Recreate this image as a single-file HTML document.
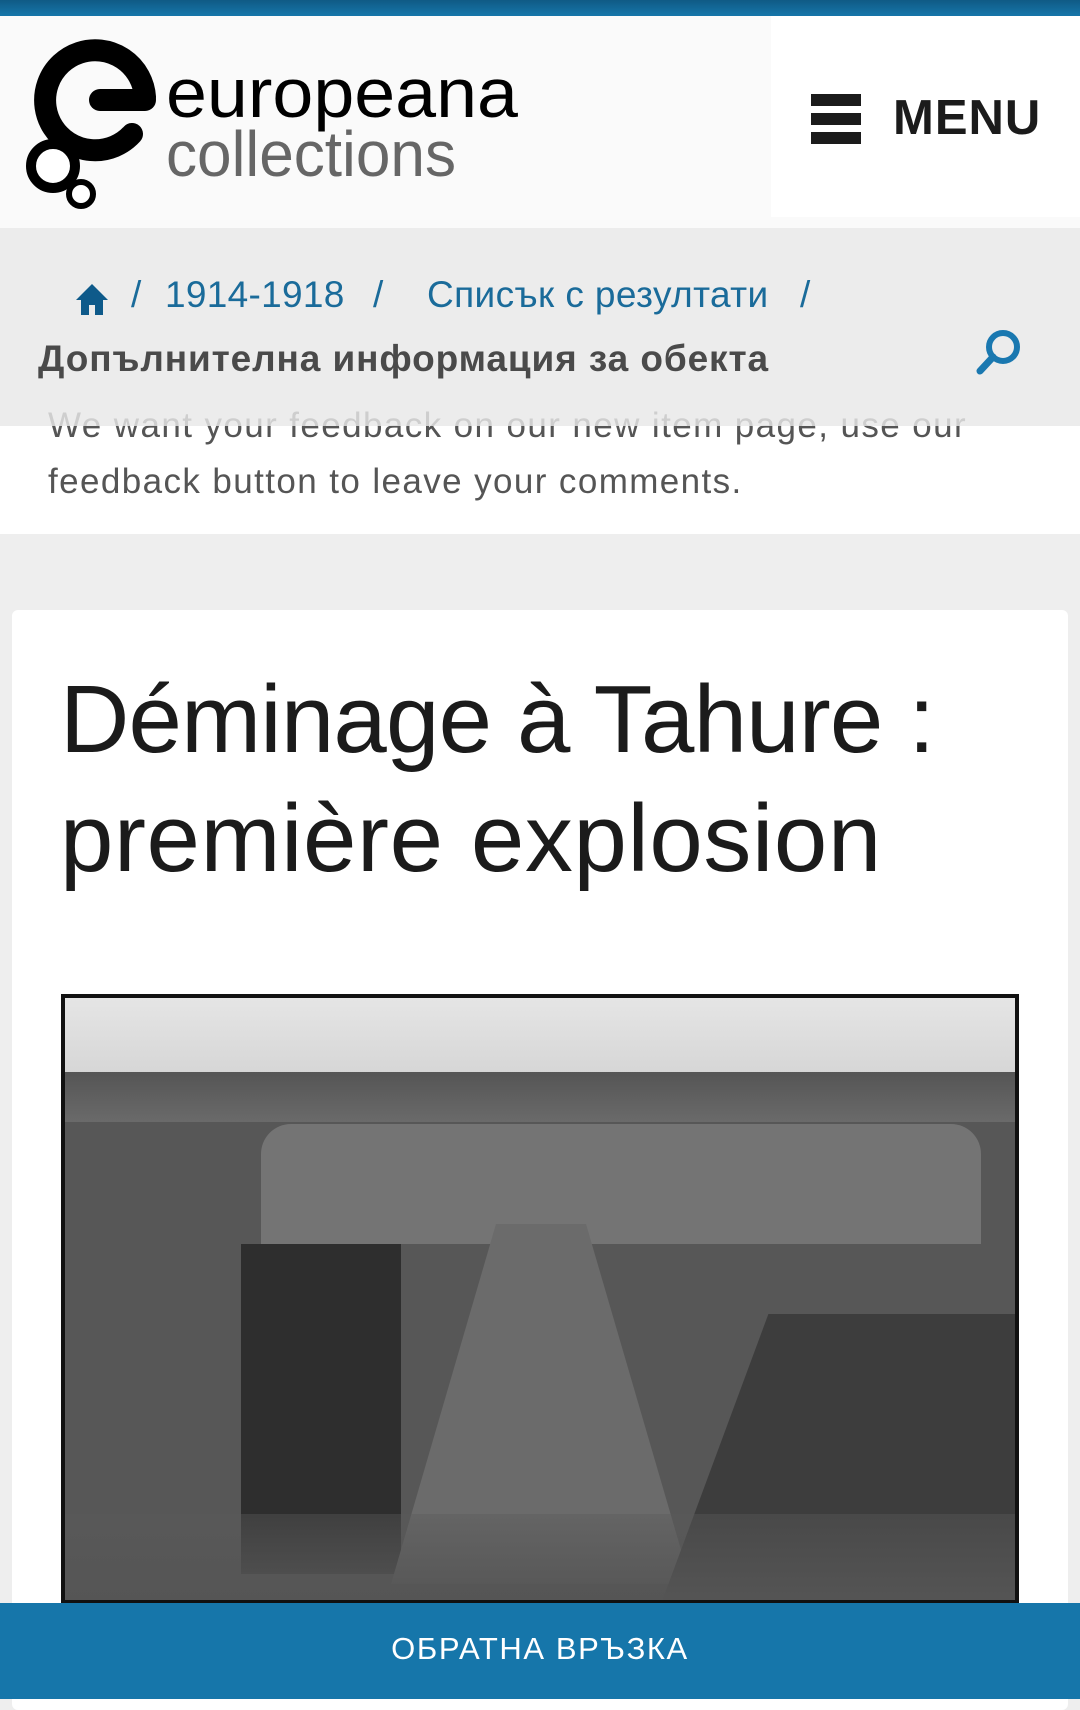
<!DOCTYPE html>
<html><head><meta charset="utf-8">
<style>
*{margin:0;padding:0;box-sizing:border-box}
body{width:1080px;height:1699px;overflow:hidden;background:#eeeeee;font-family:"Liberation Sans","Noto Sans CJK SC",sans-serif;position:relative}
.abs{position:absolute}
</style></head><body>
<div class="abs" style="left:0;top:0;width:1080px;height:16px;background:linear-gradient(#0f5a85,#1676aa)"></div>
<div class="abs" style="left:0;top:16px;width:1080px;height:212px;background:#fafafa;box-shadow:0 2px 4px rgba(0,0,0,0.08)"></div>
<div class="abs" style="left:771px;top:16px;width:309px;height:201px;background:#fff"></div>
<svg class="abs" style="left:0;top:16px" width="560" height="212" viewBox="0 16 560 212">
  <path d="M145 97 A50 50 0 1 0 132 134" fill="none" stroke="#000" stroke-width="22" stroke-linecap="round"/>
  <path d="M100 100 H145" stroke="#000" stroke-width="22" stroke-linecap="round"/>
  <circle cx="53" cy="166" r="22" fill="#fff" stroke="#000" stroke-width="10"/>
  <circle cx="81" cy="194" r="12" fill="#fff" stroke="#000" stroke-width="6"/>
  <text x="166" y="117" font-family="Liberation Sans" font-size="70" fill="#000" textLength="352" lengthAdjust="spacingAndGlyphs">europeana</text>
  <text x="166" y="176" font-family="Liberation Sans" font-size="64" fill="#666" textLength="290" lengthAdjust="spacingAndGlyphs">collections</text>
</svg>
<div class="abs" style="left:811px;top:94px;width:50px;height:12px;background:#1b1b1b"></div>
<div class="abs" style="left:811px;top:113px;width:50px;height:12px;background:#1b1b1b"></div>
<div class="abs" style="left:811px;top:132px;width:50px;height:12px;background:#1b1b1b"></div>
<div class="abs" style="left:893px;top:88px;font-size:49px;font-weight:bold;color:#1b1b1b;letter-spacing:1px;line-height:60px">MENU</div>

<div class="abs" style="left:0;top:228px;width:1080px;height:198px;background:#ececec"></div>
<svg class="abs" style="left:76px;top:283px" width="32" height="32" viewBox="0 0 32 32"><path d="M16 1 L32 17 H27 V32 H19 V22 H13 V32 H5 V17 H0 Z" fill="#0e5a8a"/></svg>
<div class="abs" style="left:0;top:270px;font-size:37px;color:#1a6b9a;line-height:50px;white-space:nowrap">
<span class="abs" style="left:131px">/</span><span class="abs" style="left:165px;letter-spacing:0.3px">1914-1918</span><span class="abs" style="left:373px">/</span><span class="abs" style="left:427px;letter-spacing:0.4px">Списък с резултати</span><span class="abs" style="left:800px">/</span></div>
<div class="abs" style="left:38px;top:334px;font-size:37px;font-weight:bold;color:#4a4a4a;line-height:50px;white-space:nowrap;letter-spacing:0.9px">Допълнителна информация за обекта</div>
<svg class="abs" style="left:970px;top:326px" width="52" height="52" viewBox="0 0 52 52"><circle cx="33" cy="21" r="14" fill="none" stroke="#1a78b0" stroke-width="6"/><path d="M23 31 L10 45" stroke="#1a78b0" stroke-width="7" stroke-linecap="round"/></svg>

<div class="abs" style="left:0;top:426px;width:1080px;height:108px;background:#fff"></div>
<div class="abs" style="left:48px;top:398px;font-size:35px;color:#555;line-height:56px;width:1030px;letter-spacing:1.4px;white-space:nowrap">We want your feedback on our new item page, use our<br>feedback button to leave your comments.</div>
<div class="abs" style="left:0;top:398px;width:1080px;height:28px;background:rgba(236,236,236,0.8)"></div>

<div class="abs" style="left:12px;top:610px;width:1056px;height:1100px;background:#fff;border-radius:6px"></div>
<div class="abs" style="left:60px;top:660px;font-size:96px;color:#1b1b1b;line-height:119px;white-space:nowrap"><span style="letter-spacing:-0.8px">Déminage à Tahure :</span><br><span style="letter-spacing:0.6px">première explosion</span></div>

<div class="abs" style="left:61px;top:994px;width:958px;height:610px;overflow:hidden;background:#5e5e5e">
 <div class="abs" style="left:0;top:0;width:958px;height:80px;background:linear-gradient(#e6e6e6,#d6d6d6)"></div>
 <div class="abs" style="left:0;top:78px;width:958px;height:50px;background:linear-gradient(#555,#6a6a6a)"></div>
 <div class="abs" style="left:0;top:128px;width:958px;height:482px;background:#575757"></div>
 <div class="abs" style="left:200px;top:130px;width:720px;height:120px;background:#747474;border-radius:30px 30px 0 0"></div>
 <div class="abs" style="left:180px;top:250px;width:160px;height:330px;background:#2e2e2e"></div>
 <div class="abs" style="left:330px;top:230px;width:300px;height:360px;background:#6b6b6b;clip-path:polygon(35% 0,65% 0,100% 100%,0 100%)"></div>
 <div class="abs" style="left:600px;top:320px;width:358px;height:290px;background:#3d3d3d;clip-path:polygon(30% 0,100% 0,100% 100%,0 100%)"></div>
 <div class="abs" style="left:0;top:520px;width:958px;height:90px;background:linear-gradient(rgba(90,90,90,0.4),#555)"></div>
 <div class="abs" style="left:0;top:0;width:958px;height:610px;box-shadow:inset 0 0 0 4px #111"></div>
</div>

<div class="abs" style="left:0;top:1603px;width:1080px;height:96px;background:#1676aa"></div>
<div class="abs" style="left:0;top:1627px;width:1080px;text-align:center;font-size:31px;color:#fff;letter-spacing:1.6px;line-height:44px">ОБРАТНА ВРЪЗКА</div>
</body></html>
